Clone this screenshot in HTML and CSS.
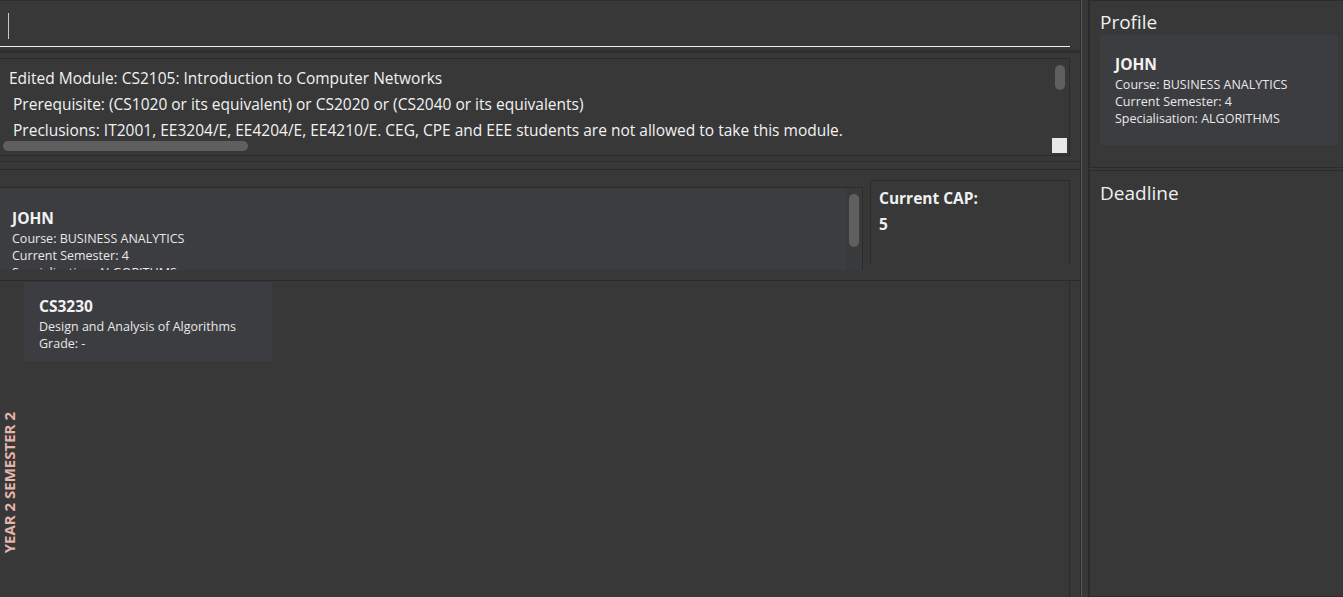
FILE: index.html
```html
<!DOCTYPE html>
<html>
<head>
<meta charset="utf-8">
<link rel="stylesheet" href="styles.css">
</head>
<body>
<div class="app">
  <div class="main">
    <div class="command-box">
      <div class="command-input"><span class="caret"></span></div>
    </div>
    <div class="result-wrap">
      <div class="result-box">
        <div class="result-text">
          <div class="rline">Edited Module: CS2105: Introduction to Computer Networks</div>
          <div class="rline">&nbsp;Prerequisite: (CS1020 or its equivalent) or CS2020 or (CS2040 or its equivalents)</div>
          <div class="rline">&nbsp;Preclusions: IT2001, EE3204/E, EE4204/E, EE4210/E. CEG, CPE and EEE students are not allowed to take this module.</div>
        </div>
        <div class="r-vthumb"></div>
        <div class="r-hthumb"></div>
        <div class="r-corner"></div>
      </div>
    </div>
    <div class="split-gap"></div>
    <div class="middle">
      <div class="person-list">
        <div class="person-card">
          <div class="card-name">JOHN</div>
          <div class="card-line">Course: BUSINESS ANALYTICS</div>
          <div class="card-line">Current Semester: 4</div>
          <div class="card-line">Specialisation: ALGORITHMS</div>
        </div>
        <div class="list-track"><div class="list-thumb"></div></div>
      </div>
      <div class="cap-box">
        <div class="cap-title">Current CAP:</div>
        <div class="cap-value">5</div>
      </div>
    </div>
    <div class="semesters">
      <div class="semester">
        <div class="sem-label-col"><span class="sem-label">YEAR 2 SEMESTER 2</span></div>
        <div class="modules">
          <div class="module-card">
            <div class="card-name">CS3230</div>
            <div class="card-line">Design and Analysis of Algorithms</div>
            <div class="card-line">Grade: -</div>
          </div>
        </div>
      </div>
    </div>
  </div>
  <div class="divider"></div>
  <div class="side">
    <div class="side-panel profile-panel">
      <div class="side-title">Profile</div>
      <div class="side-card">
        <div class="card-name">JOHN</div>
        <div class="card-line">Course: BUSINESS ANALYTICS</div>
        <div class="card-line">Current Semester: 4</div>
        <div class="card-line">Specialisation: ALGORITHMS</div>
      </div>
    </div>
    <div class="side-panel deadline-panel">
      <div class="side-title">Deadline</div>
    </div>
  </div>
</div>
</body>
</html>
```

FILE: styles.css
```css
* { box-sizing: border-box; }
html, body {
  margin: 0;
  padding: 0;
  background: #383838;
  width: 1343px;
  height: 597px;
  overflow: hidden;
  font-family: "Open Sans", "Noto Sans", sans-serif;
  color: #ffffff;
}
.app {
  display: flex;
  height: 597px;
  overflow: hidden;
}
.main {
  width: 1081px;
  flex: none;
  border-right: 1px solid #2a2a2a;
  display: flex;
  flex-direction: column;
  overflow: hidden;
}
.main > * { flex: none; }
.command-box {
  height: 53px;
  border-top: 1px solid #2d2d2d;
  border-bottom: 3px solid #2e2e2e;
  padding-top: 11px;
}
.command-input {
  width: 1070px;
  height: 35px;
  border-bottom: 1px solid #f0f0f0;
  padding-left: 8px;
  padding-top: 1px;
}
.caret {
  display: block;
  width: 1px;
  height: 26px;
  background: #c8c8c8;
}
.result-wrap {
  padding-top: 5px;
  height: 109px;
  border-bottom: 1px solid #2d2d2d;
}
.result-box {
  position: relative;
  width: 1070px;
  height: 98px;
  border: 1px solid #2b2b2b;
  border-left: none;
  overflow: hidden;
  padding: 6px 0 0 9px;
}
.rline {
  font-size: 15.5px;
  line-height: 26px;
  white-space: nowrap;
  color: #f2f2f2;
}
.r-vthumb {
  position: absolute;
  left: 1055px;
  top: 6px;
  width: 10px;
  height: 25px;
  border-radius: 5px;
  background: #5f5f5f;
}
.r-hthumb {
  position: absolute;
  left: 3px;
  top: 82px;
  width: 245px;
  height: 10px;
  border-radius: 5px;
  background: #5f5f5f;
}
.r-corner {
  position: absolute;
  left: 1052px;
  top: 79px;
  width: 15px;
  height: 15px;
  background: #e8e8e8;
}
.split-gap {
  height: 8px;
  border-bottom: 1px solid #2b2b2b;
}
.middle {
  display: flex;
  height: 111px;
  border-bottom: 1px solid #2b2b2b;
}
.person-list {
  margin-top: 17px;
  width: 863px;
  height: 83px;
  border-top: 1px solid #2b2b2b;
  border-right: 1px solid #2b2b2b;
  display: flex;
  overflow: hidden;
}
.person-card {
  flex: 1;
  background: #3c3d40;
  padding: 19px 12px 0;
}
.list-track {
  width: 16px;
  background: #393a3c;
  padding: 6px 2px 0 3px;
}
.list-thumb {
  width: 10px;
  height: 53px;
  border-radius: 5px;
  background: #5f5f5f;
}
.cap-box {
  margin-left: 7px;
  margin-top: 10px;
  width: 200px;
  height: 84px;
  border: 1px solid #2b2b2b;
  border-bottom: none;
  padding: 7px 0 0 8px;
  font-weight: 700;
  font-size: 15.5px;
  color: #f0f0f0;
}
.cap-title { line-height: 20px; }
.cap-value { line-height: 20px; margin-top: 6px; }
.card-name {
  font-weight: 700;
  font-size: 15.5px;
  line-height: 23px;
  color: #f2f2f2;
}
.card-line {
  font-size: 12.5px;
  line-height: 17px;
  color: #e8e8e8;
  white-space: nowrap;
}
.semesters {
  width: 1070px;
  border-right: 1px solid #2b2b2b;
}
.semester {
  display: flex;
  height: 404px;
}
.sem-label-col {
  width: 24px;
  padding-right: 6px;
  display: flex;
  align-items: center;
  justify-content: center;
}
.sem-label {
  writing-mode: vertical-rl;
  transform: rotate(180deg);
  font-size: 15px;
  font-weight: 700;
  color: #e3b5ab;
  white-space: nowrap;
}
.modules {
  padding-top: 1px;
}
.module-card {
  width: 248px;
  height: 79px;
  background: #3c3d40;
  padding: 13px 15px 0;
}
.divider {
  width: 8px;
  flex: none;
  border-left: 1px solid #5a5a5a;
  border-right: 1px solid #2a2a2a;
}
.side {
  flex: 1;
  display: flex;
  flex-direction: column;
}
.side-panel {
  border: 1px solid #2b2b2b;
  border-right: none;
  padding: 8px 0 0 10px;
}
.profile-panel {
  height: 168px;
  margin-bottom: 2px;
  flex: none;
}
.deadline-panel {
  flex: 1;
  padding-top: 9px;
}
.side-title {
  font-size: 19px;
  line-height: 26px;
  color: #f0f0f0;
}
.side-card {
  width: 238px;
  height: 110px;
  background: #3c3d40;
  padding: 18px 15px 0;
}
```
